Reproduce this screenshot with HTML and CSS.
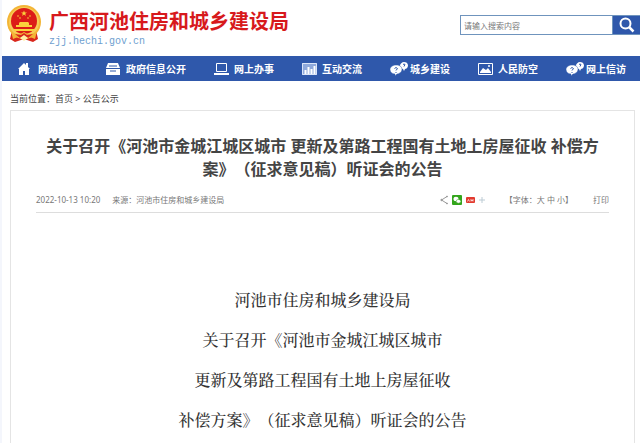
FILE: index.html
```html
<!DOCTYPE html>
<html lang="zh">

<head>
    <meta charset="UTF-8">
    <meta name="viewport" content="width=device-width, initial-scale=1.0">
    <title>广西河池住房和城乡建设局</title>
    <link rel="stylesheet" href="styles.css">
</head>

<body>
    <header class="header">
        <svg class="emblem" viewBox="0 0 36 38">
            <path d="M6 25 L4 34 L9 37 L18 34 L27 37 L32 34 L30 25 Z" fill="#d9271c"/>
            <circle cx="18" cy="17" r="17" fill="#f3b536"/>
            <circle cx="18" cy="17" r="15" fill="#f7cd58"/>
            <circle cx="18" cy="16" r="13" fill="#dc1c18"/>
            <path d="M18 5.500l.8 2h2.200l-1.800 1.300 .7 2.100-1.900-1.300-1.900 1.300 .7-2.100-1.800-1.300h2.200z" fill="#fbd33c"/>
            <g fill="#fbd33c">
                <circle cx="12" cy="11" r=".8"/>
                <circle cx="14" cy="13" r=".8"/>
                <circle cx="22" cy="13" r=".8"/>
                <circle cx="24" cy="11" r=".8"/>
                <path d="M13 18l1-1h8l1 1v2h3v2H10v-2h3z"/>
                <path d="M7 24h22l-2 2H9z"/>
            </g>
            <path d="M5 26q6 6 13 1 7 5 13-1l-2 8-5-2-6 3-6-3-5 2z" fill="#f3b536"/>
            <path d="M9 29l6 1 3-2 3 2 6-1-5 4-4-2-4 2z" fill="#d9271c"/>
            <path d="M14 33l4-3 4 3-4 3z" fill="#fff0a8"/>
        </svg>
        <div class="brand">
            <div class="brand-name">广西河池住房和城乡建设局</div>
            <div class="brand-url">zjj.hechi.gov.cn</div>
        </div>
        <form class="search">
            <input type="text" class="search-input" placeholder="请输入搜索内容" aria-label="请输入搜索内容">
            <button type="button" class="search-btn" aria-label="搜索">
                <svg width="16" height="16" viewBox="0 0 16 16" fill="none" stroke="#fff">
                    <circle cx="6.500" cy="6.500" r="5" stroke-width="2"/>
                    <path d="M10 10l4.500 4.500" stroke-width="2.500"/>
                </svg>
            </button>
        </form>
    </header>

    <nav class="nav">
        <a href="#">
            <svg viewBox="0 0 20 14" fill="#fff">
                <path d="M0 7L6 1l2 2V1h2v4l2 2h-1v6H7V9H5v4H1V7z"/>
            </svg>网站首页</a>
        <a href="#">
            <svg viewBox="0 0 20 14" fill="#fff">
                <path d="M2 1h10l2 5H0z"/>
                <path d="M0 7h14v6H0z"/>
                <path d="M3 4h8M4 9h6" stroke="#2f58ab"/>
            </svg>政府信息公开</a>
        <a href="#">
            <svg viewBox="0 0 20 14" fill="none" stroke="#fff">
                <path d="M2.500 1.500h10v8h-10z"/>
                <path d="M0 12h15" stroke-width="2"/>
            </svg>网上办事</a>
        <a href="#">
            <svg viewBox="0 0 20 14">
                <path d="M0 1h15v12H0z" fill="#8fa9dc"/>
                <path d="M3.500 12V8M6.500 12V5M9.500 12V7M12.500 12V4" stroke="#fff" stroke-width="2"/>
                <path d="M.5 1.500h14v11H.5z" fill="none" stroke="#dbe5f8"/>
            </svg>互动交流</a>
        <a href="#">
            <svg viewBox="0 0 20 14">
                <path d="M14 0c2 0 4 1 4 3.500S16 7 15 7l-1 2-1-2c-2 0-3-2-3-3.500S12 0 14 0z" fill="#fff"/>
                <path d="M6 3c4 0 6 2 6 4.500S9 12 7 12l-2 2v-2c-3 0-5-2-5-4.500S3 3 6 3z" fill="#fff" stroke="#2f58ab" stroke-width=".5"/>
                <path d="M4.500 6.500q1.500-2 3 0L6 8.500M6 10v1M13 2.500q1-1 2 0l-1 2" fill="none" stroke="#2f58ab"/>
            </svg>城乡建设</a>
        <a href="#">
            <svg viewBox="0 0 20 14">
                <path d="M.5 1.500h14v11H.5z" fill="none" stroke="#fff"/>
                <path d="M2 10l3-4 3 2 2-2 3 4v1H2z" fill="#fff"/>
                <circle cx="11" cy="4" r="1" fill="#fff"/>
            </svg>人民防空</a>
        <a href="#">
            <svg viewBox="0 0 20 14">
                <path d="M14 0c2 0 4 1 4 3.500S16 7 15 7l-1 2-1-2c-2 0-3-2-3-3.500S12 0 14 0z" fill="#fff"/>
                <path d="M6 3c4 0 6 2 6 4.500S9 12 7 12l-2 2v-2c-3 0-5-2-5-4.500S3 3 6 3z" fill="#fff" stroke="#2f58ab" stroke-width=".5"/>
                <path d="M4.500 6.500q1.500-2 3 0L6 8.500M6 10v1M13 2.500q1-1 2 0l-1 2" fill="none" stroke="#2f58ab"/>
            </svg>网上信访</a>
    </nav>

    <main class="container">
        <div class="crumbs">当前位置：<a href="#">首页</a> &gt; <a href="#">公告公示</a></div>
        <article class="article">
            <h1>关于召开《河池市金城江城区城市 更新及第路工程国有土地上房屋征收 补偿方案》（征求意见稿）听证会的公告</h1>
            <div class="meta">
                <span>2022-10-13 10:20</span>
                <span>来源：河池市住房和城乡建设局</span>
                <div class="share">
                    <a href="#" aria-label="分享">
                        <svg width="8" height="10" viewBox="0 0 8 10" fill="#999" stroke="#999">
                            <path d="M7 1.500L1.500 5 7 8.500" fill="none"/>
                            <circle cx="7" cy="1.500" r=".5"/>
                            <circle cx="1.500" cy="5" r=".7"/>
                            <circle cx="7" cy="8.500" r=".5"/>
                        </svg></a>
                    <a href="#" aria-label="微信">
                        <svg width="10" height="10" viewBox="0 0 10 10">
                            <rect width="10" height="10" rx="1" fill="#33a51c"/>
                            <ellipse cx="4" cy="4" rx="2.600" ry="2.200" fill="#fff"/>
                            <ellipse cx="6.500" cy="6.300" rx="2.300" ry="1.900" fill="#fff" stroke="#33a51c" stroke-width=".5"/>
                        </svg></a>
                    <a href="#" aria-label="人民网">
                        <svg width="9" height="10" viewBox="0 0 9 10">
                            <rect y="2" width="9" height="6" rx="1" fill="#e23a2e"/>
                            <path d="M1.500 6.500l1-2 1 2M5 4v2.500M7 4v2.500M5 5.500h2" fill="none" stroke="#fff" stroke-width=".7"/>
                        </svg></a>
                    <a href="#" aria-label="更多">
                        <svg width="6" height="10" viewBox="0 0 6 10">
                            <path d="M3 2v6M0 5h6" stroke="#bccbd4"/>
                        </svg></a>
                </div>
                <div class="sizes">【字体：<a href="#">大</a> <a href="#">中</a> <a href="#">小</a>】</div>
                <a href="#">打印</a>
            </div>
            <div class="content">
                <p>河池市住房和城乡建设局</p>
                <p>关于召开《河池市金城江城区城市</p>
                <p>更新及第路工程国有土地上房屋征收</p>
                <p>补偿方案》（征求意见稿）听证会的公告</p>
            </div>
        </article>
    </main>
</body>
</html>
```

FILE: styles.css
```css
* {
    box-sizing: border-box;
}
body {
    display: flex;
    flex-direction: column;
    min-height: 100vh;
    font-family: "Noto Sans", "Noto Sans CJK SC", sans-serif;
    margin: 0;
    padding-left: 2px;
    background: linear-gradient(to right, #f4f6fc 2px, #fff 2px);
    color: #444;
    text-spacing-trim: space-all;
}
a {
    color: inherit;
    text-decoration: none;
}
.header {
    display: flex;
    align-items: flex-start;
    height: 56px;
    padding: 5px 0 0 4px;
}
.emblem {
    width: 36px;
    height: 38px;
    margin-right: 7px;
}
.brand {
    padding-top: 4px;
}
.brand-name {
    font-size: 20px;
    line-height: 26px;
    font-weight: bold;
    color: #d7191c;
}
.brand-url {
    font-family: "Liberation Mono", monospace;
    font-size: 10px;
    line-height: 14px;
    color: #6f9fd0;
}
.search {
    display: flex;
    width: 180px;
    height: 20px;
    margin: 10px 0 0 auto;
}
.search-input {
    flex: 1;
    min-width: 0;
    padding: 0 3px;
    border: 1px solid #6f94bd;
    border-right: none;
    font-family: inherit;
    font-size: 8px;
    color: #444;
}
.search-input::placeholder {
    color: #777;
}
.search-btn {
    display: flex;
    align-items: center;
    justify-content: center;
    width: 28px;
    padding: 0;
    border: 1px solid #6f94bd;
    border-right: none;
    background: #2f58ab;
    cursor: pointer;
}
.nav {
    display: flex;
    gap: 28px;
    height: 25px;
    padding-left: 16px;
    background: #2f58ab;
}
.nav a {
    display: flex;
    align-items: center;
    font-size: 10px;
    font-weight: bold;
    color: #fff;
    white-space: nowrap;
}
.nav svg {
    width: 20px;
    height: 14px;
}
.container {
    display: flex;
    flex-direction: column;
    flex: 1;
    padding: 0 5px 0 8px;
}
.crumbs {
    padding: 10px 0 3px;
    font-size: 9px;
    line-height: 16px;
}
.article {
    flex: 1;
    padding: 24px 25px 0;
    border: 1px solid #e4e4e4;
    border-bottom: none;
}
h1 {
    margin: 0;
    padding: 0 8px;
    font-size: 16px;
    line-height: 23px;
    text-align: center;
}
.meta {
    display: flex;
    align-items: center;
    gap: 12px;
    margin-top: 10px;
    padding-bottom: 3px;
    border-bottom: 1px solid #ddd;
    font-size: 8px;
    line-height: 18px;
    color: #777;
}
.share {
    display: flex;
    gap: 4px;
    margin-left: auto;
}
.share a {
    display: flex;
}
.sizes {
    padding: 0 8px;
}
.content {
    padding-top: 67px;
    font-family: "Noto Serif CJK SC", "Noto Sans CJK SC", serif;
    font-size: 16px;
    font-weight: 500;
    line-height: 40px;
    text-align: center;
    color: #333;
}
.content p {
    margin: 0;
}
```
